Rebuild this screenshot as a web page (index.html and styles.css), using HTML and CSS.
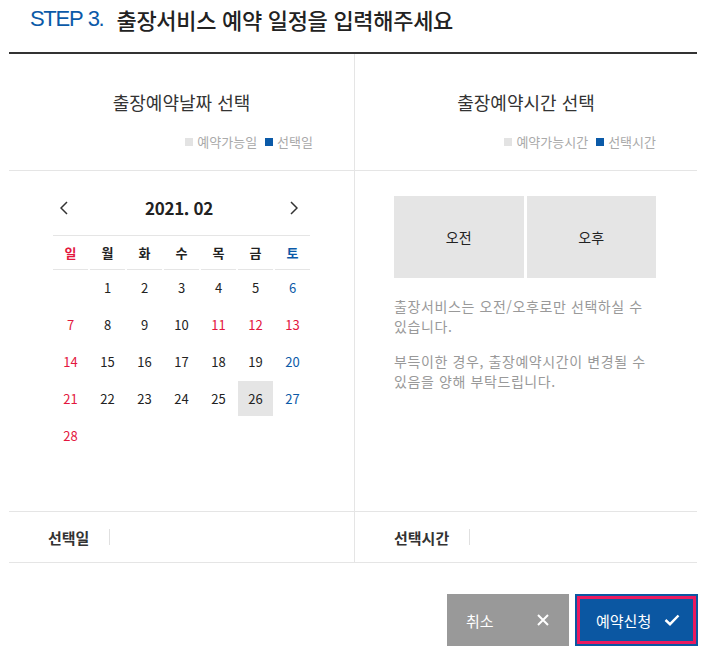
FILE: index.html
```html
<!DOCTYPE html>
<html lang="ko">
<head>
<meta charset="utf-8">
<title>STEP 3</title>
<link rel="stylesheet" href="styles.css">
</head>
<body>
<div class="page">
  <header class="step-head">
    <span class="step-no">STEP 3.</span>
    <h2 class="step-title">출장서비스 예약 일정을 입력해주세요</h2>
  </header>

  <div class="booking">
    <section class="col col-date">
      <div class="col-head">
        <h3 class="col-title">출장예약날짜 선택</h3>
        <ul class="legend">
          <li><i class="sq sq-avail"></i>예약가능일</li>
          <li><i class="sq sq-sel"></i>선택일</li>
        </ul>
      </div>
      <div class="col-body">
        <div class="cal">
          <div class="cal-nav">
            <button class="arrow" type="button" aria-label="이전달">
              <svg width="8" height="14" viewBox="0 0 8 14"><polyline points="7,1 1,7 7,13" fill="none" stroke="#333" stroke-width="1.5"/></svg>
            </button>
            <strong class="cal-month">2021. 02</strong>
            <button class="arrow" type="button" aria-label="다음달">
              <svg width="8" height="14" viewBox="0 0 8 14"><polyline points="1,1 7,7 1,13" fill="none" stroke="#333" stroke-width="1.5"/></svg>
            </button>
          </div>
          <div class="cal-week">
            <span class="sun">일</span><span>월</span><span>화</span><span>수</span><span>목</span><span>금</span><span class="sat">토</span>
          </div>
          <div class="cal-days">
            <span></span><span>1</span><span>2</span><span>3</span><span>4</span><span>5</span><span class="sat">6</span>
            <span class="sun">7</span><span>8</span><span>9</span><span>10</span><span class="sun">11</span><span class="sun">12</span><span class="sun">13</span>
            <span class="sun">14</span><span>15</span><span>16</span><span>17</span><span>18</span><span>19</span><span class="sat">20</span>
            <span class="sun">21</span><span>22</span><span>23</span><span>24</span><span>25</span><span class="selected">26</span><span class="sat">27</span>
            <span class="sun">28</span>
          </div>
        </div>
      </div>
      <div class="col-foot">
        <span class="foot-label">선택일</span><span class="foot-sep"></span>
      </div>
    </section>

    <section class="col col-time">
      <div class="col-head">
        <h3 class="col-title">출장예약시간 선택</h3>
        <ul class="legend">
          <li><i class="sq sq-avail"></i>예약가능시간</li>
          <li><i class="sq sq-sel"></i>선택시간</li>
        </ul>
      </div>
      <div class="col-body time-body">
        <div class="slots">
          <button class="slot" type="button">오전</button>
          <button class="slot" type="button">오후</button>
        </div>
        <div class="notes">
          <p>출장서비스는 오전/오후로만 선택하실 수 있습니다.</p>
          <p>부득이한 경우, 출장예약시간이 변경될 수 있음을 양해 부탁드립니다.</p>
        </div>
      </div>
      <div class="col-foot">
        <span class="foot-label">선택시간</span><span class="foot-sep"></span>
      </div>
    </section>
  </div>

  <div class="actions">
    <button class="btn btn-cancel" type="button">
      <span>취소</span>
      <svg width="12" height="12" viewBox="0 0 12 12"><path d="M1 1L11 11M11 1L1 11" stroke="#fff" stroke-width="2" fill="none"/></svg>
    </button>
    <button class="btn btn-submit" type="button">
      <span>예약신청</span>
      <svg width="16" height="12" viewBox="0 0 16 12"><polyline points="1.5,6 6,10.2 14.5,1.5" fill="none" stroke="#fff" stroke-width="2.4"/></svg>
    </button>
  </div>
</div>
</body>
</html>
```

FILE: styles.css
```css
* { box-sizing: border-box; }

body {
  margin: 0;
  background: #fff;
  color: #333;
  font-family: "Noto Sans CJK KR", "Noto Sans", sans-serif;
}

.page {
  width: 688px;
  margin-left: 9px;
}

/* header */
.step-head {
  display: flex;
  align-items: center;
  gap: 13px;
  height: 54px;
  padding: 0 0 14px 21px;
  border-bottom: 2px solid #333;
}

.step-no {
  font-family: "Liberation Sans", Arial, sans-serif;
  font-size: 22px;
  letter-spacing: -1.3px;
  word-spacing: 1px;
  color: #0b5aa8;
  line-height: 24px;
}

.step-title {
  margin: 0;
  font-size: 22px;
  font-weight: 500;
  line-height: 24px;
  color: #222;
  letter-spacing: -0.3px;
}

/* two columns */
.booking {
  display: grid;
  grid-template-columns: 346px 342px;
}

.col-date {
  border-right: 1px solid #e5e5e5;
}

.col-head {
  height: 117px;
  padding-top: 36px;
  border-bottom: 1px solid #e5e5e5;
}

.col-title {
  margin: 0;
  font-size: 18px;
  font-weight: 400;
  line-height: 24px;
  text-align: center;
  color: #333;
}

.legend {
  display: flex;
  justify-content: flex-end;
  gap: 8px;
  margin: 20px 0 0;
  padding: 0 41px 0 0;
  list-style: none;
  font-size: 13px;
  line-height: 16px;
  color: #aaa;
}

.legend li {
  display: flex;
  align-items: center;
}

.sq {
  display: inline-block;
  width: 8px;
  height: 8px;
  margin-right: 4px;
}

.sq-avail { background: #e3e3e3; }
.sq-sel { background: #0b5aa8; }

.col-body {
  height: 340px;
  padding-top: 25px;
}

/* calendar */
.cal {
  width: 257px;
  margin: 0 auto;
}

.cal-nav {
  display: flex;
  align-items: center;
  justify-content: space-between;
  height: 24px;
  padding: 0 12px 0 7px;
}

.arrow {
  display: flex;
  padding: 0;
  border: 0;
  background: none;
}

.cal-month {
  font-size: 17px;
  font-weight: 700;
  letter-spacing: -0.3px;
  color: #222;
  line-height: 24px;
}

.cal-week,
.cal-days {
  display: grid;
  grid-template-columns: repeat(7, 35px);
  column-gap: 2px;
  text-align: center;
}

.cal-week {
  margin-top: 15px;
  border-top: 1px solid #e5e5e5;
}

.cal-week span {
  height: 34px;
  line-height: 33px;
  border-bottom: 1px solid #e5e5e5;
  font-size: 13px;
  font-weight: 700;
  color: #222;
}

.cal-days {
  grid-auto-rows: 35px;
  row-gap: 2px;
}

.cal-days span {
  line-height: 35px;
  font-size: 13px;
  color: #222;
}

.cal-week .sun,
.cal-days .sun { color: #e3173e; }
.cal-week .sat,
.cal-days .sat { color: #0b5aa8; }

.cal-days .selected {
  background: #e5e5e5;
}

/* time column */
.time-body {
  padding: 25px 41px 0 39px;
}

.slots {
  display: grid;
  grid-template-columns: 1fr 1fr;
  column-gap: 3px;
}

.slot {
  height: 82px;
  border: 0;
  background: #e5e5e5;
  font-family: inherit;
  font-size: 14px;
  color: #222;
}

.notes {
  margin-top: 18px;
  font-size: 14px;
  line-height: 20px;
  color: #999;
  letter-spacing: 0.6px;
  word-break: keep-all;
}

.notes p { margin: 0; }
.notes p + p { margin-top: 15px; }

/* footer row */
.col-foot {
  display: flex;
  align-items: center;
  height: 52px;
  padding-left: 39px;
  border-top: 1px solid #e5e5e5;
  border-bottom: 1px solid #e5e5e5;
}

.foot-label {
  font-size: 15px;
  font-weight: 700;
  color: #333;
}

.foot-sep {
  width: 1px;
  height: 16px;
  margin-left: 20px;
  background: #e0e0e0;
}

/* actions */
.actions {
  display: flex;
  justify-content: flex-end;
  gap: 6px;
  margin: 31px -1px 0 0;
}

.btn {
  display: flex;
  align-items: center;
  justify-content: space-between;
  height: 52px;
  border: 0;
  font-family: inherit;
  font-size: 15px;
  color: #fff;
}

.btn-cancel {
  width: 122px;
  padding: 0 20px 0 19px;
  background: #999;
}

.btn-submit {
  width: 123px;
  padding: 0 18px 0 21px;
  background: #0b57a2;
  outline: 3px solid #ea1a5f;
  outline-offset: -5px;
}
```
